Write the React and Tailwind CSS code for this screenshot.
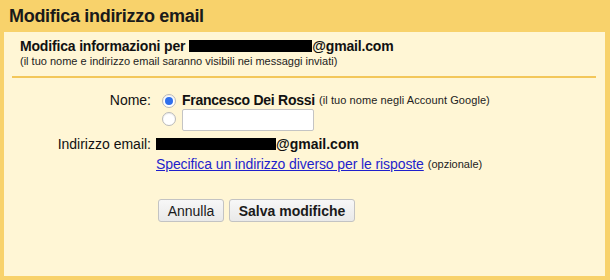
import React from "react";

function Radio({ checked }) {
  return (
    <span className="inline-flex items-center justify-center w-[14px] h-[14px] rounded-full border border-[#b9b9b9] bg-white shadow-[inset_0_1px_1px_rgba(0,0,0,0.08)]">
      {checked ? <span className="w-[8px] h-[8px] rounded-full bg-[#2f6fec]" /> : null}
    </span>
  );
}

export default function App() {
  return (
    <div className="w-[610px] h-[280px] bg-[#f8d26b] flex flex-col text-[#111] font-['Liberation_Sans',Arial,sans-serif]">
      <div className="h-[32px] shrink-0 pl-[9px] pt-[6px] text-[18px] leading-[20px] font-bold tracking-[-0.3px] text-[#1a1a1a]">
        Modifica indirizzo email
      </div>
      <div className="flex-1 ml-[4px] mr-[5px] mb-[4px] bg-[#fff6d5] flex flex-col">
        <div className="pl-[16px] pt-[6px]">
          <div className="flex items-center text-[14px] leading-[16px] font-bold tracking-[-0.17px]">
            <span>Modifica informazioni per</span>
            <span className="inline-block w-[123px] h-[12px] bg-black ml-[4px]" />
            <span>@gmail.com</span>
          </div>
          <div className="text-[11px] leading-[13px] mt-[1px] text-[#222]">
            (il tuo nome e indirizzo email saranno visibili nei messaggi inviati)
          </div>
        </div>
        <div className="mt-[8px] ml-[8px] mr-[9px] h-[2px] bg-[#f3c75a]" />
        <div className="mt-[13px] flex flex-col text-[14px]">
          <div className="flex items-center h-[18px]">
            <div className="w-[147px] text-right leading-[16px]">Nome:</div>
            <div className="ml-[5px] flex items-center">
              <span className="ml-[6px]"><Radio checked /></span>
              <span className="ml-[6px] font-bold leading-[16px] tracking-[-0.25px]">Francesco Dei Rossi</span>
              <span className="ml-[4px] text-[11px] leading-[13px] text-[#222] tracking-[0.08px]">(il tuo nome negli Account Google)</span>
            </div>
          </div>
          <div className="flex items-center h-[22px]">
            <div className="w-[147px]" />
            <div className="ml-[5px] flex items-center">
              <span className="ml-[6px] mt-[2px]"><Radio /></span>
              <div className="ml-[6px] w-[132px] h-[22px] bg-white border border-[#c4c4c4] rounded-[2px]" />
            </div>
          </div>
          <div className="flex items-center h-[18px] mt-[4px]">
            <div className="w-[147px] text-right leading-[16px]">Indirizzo email:</div>
            <div className="ml-[5px] flex items-center">
              <span className="inline-block w-[120px] h-[12px] bg-black" />
              <span className="font-bold leading-[16px]">@gmail.com</span>
            </div>
          </div>
          <div className="flex items-center h-[18px] mt-[2px]">
            <div className="w-[147px]" />
            <div className="ml-[5px] flex items-center">
              <a href="#" className="text-[#1f1fcc] underline leading-[16px] tracking-[-0.1px]">Specifica un indirizzo diverso per le risposte</a>
              <span className="ml-[4px] text-[11px] leading-[13px] text-[#222]">(opzionale)</span>
            </div>
          </div>
          <div className="flex mt-[26px] ml-[154px] gap-[5px]">
            <button className="w-[66px] h-[23px] bg-gradient-to-b from-[#f7f7f7] to-[#e9e9e9] border border-[#c3c3c3] rounded-[3px] text-[14px] leading-[16px] text-[#1a1a1a]">Annulla</button>
            <button className="w-[126px] h-[23px] bg-gradient-to-b from-[#f7f7f7] to-[#e9e9e9] border border-[#c3c3c3] rounded-[3px] text-[14px] leading-[16px] font-bold text-[#1a1a1a]">Salva modifiche</button>
          </div>
        </div>
      </div>
    </div>
  );
}
